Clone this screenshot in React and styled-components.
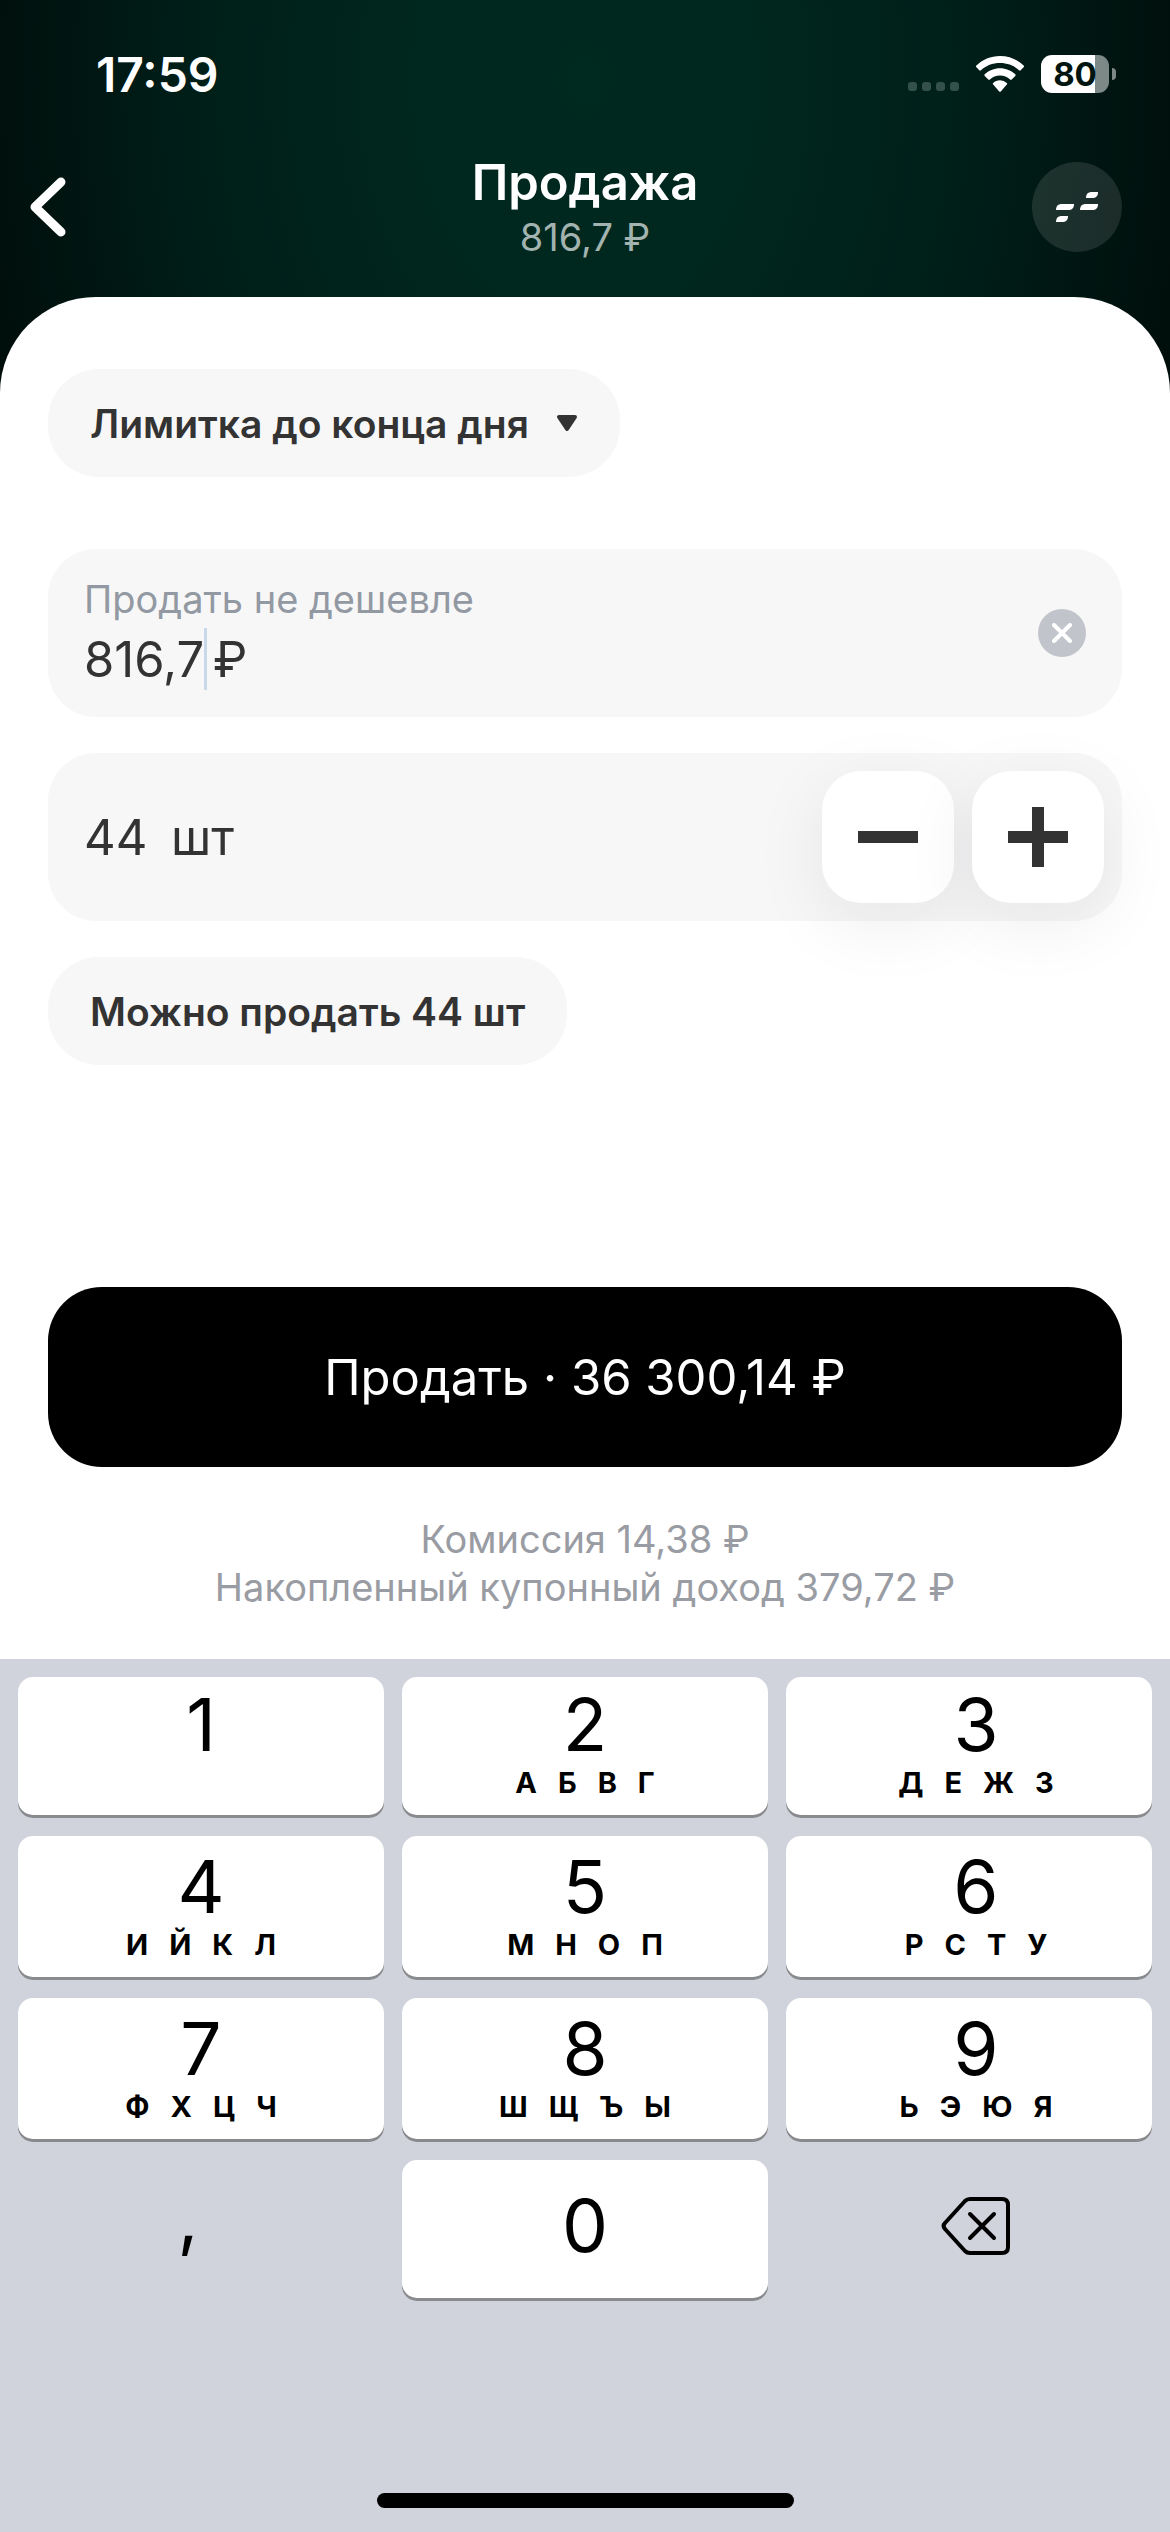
import React, { useState } from "react";
import styled, { createGlobalStyle } from "styled-components";

const GlobalStyle = createGlobalStyle`
  * {
    box-sizing: border-box;
  }

  body {
    margin: 0;
    background: #d0d3dc;
    font-family: Inter, "Liberation Sans", sans-serif;
    color: #333333;
  }

  button,
  input {
    margin: 0;
    padding: 0;
    border: none;
    background: none;
    font-family: inherit;
    color: inherit;
  }

  h1,
  p {
    margin: 0;
  }

  svg {
    display: block;
  }
`;

const ROWS = [
  [
    { digit: "1", letters: "" },
    { digit: "2", letters: "АБВГ" },
    { digit: "3", letters: "ДЕЖЗ" },
  ],
  [
    { digit: "4", letters: "ИЙКЛ" },
    { digit: "5", letters: "МНОП" },
    { digit: "6", letters: "РСТУ" },
  ],
  [
    { digit: "7", letters: "ФХЦЧ" },
    { digit: "8", letters: "ШЩЪЫ" },
    { digit: "9", letters: "ЬЭЮЯ" },
  ],
];

function StatusBar() {
  return (
    <StatusBarStyle>
      <Clock>17:59</Clock>
      <StatusIcons>
        <Dots>
          <i />
          <i />
          <i />
          <i />
        </Dots>
        <svg width="48" height="36" viewBox="0 0 48 36" fill="#ffffff">
          <path d="M24 0C14.7 0 6.3 3.6.4 9.600a1.200 1.200 0 0 0 0 1.700l2.900 2.900a1.200 1.200 0 0 0 1.700 0C9.900 9.400 16.600 6.900 24 6.900s14.100 2.500 19 7.300a1.200 1.200 0 0 0 1.700 0l2.900-2.900a1.200 1.200 0 0 0 0-1.700C41.700 3.600 33.300 0 24 0z" />
          <path d="M24 12.200c-5.900 0-11.300 2.300-15.300 6.100a1.200 1.200 0 0 0 0 1.700l3.600 3.600a1.200 1.200 0 0 0 1.600 0c2.700-2.500 6.200-4 10.100-4s7.400 1.500 10.100 4a1.200 1.200 0 0 0 1.600 0l3.600-3.600a1.200 1.200 0 0 0 0-1.700C35.300 14.500 29.900 12.200 24 12.200z" />
          <path d="M24 24.300c-2.600 0-5 1-6.800 2.600a1.200 1.200 0 0 0 0 1.700l6 6.900a1.200 1.200 0 0 0 1.600 0l6-6.900a1.200 1.200 0 0 0 0-1.700A10.200 10.200 0 0 0 24 24.300z" />
        </svg>
        <Battery>
          <BatteryBody>80</BatteryBody>
          <BatteryTip />
        </Battery>
      </StatusIcons>
    </StatusBarStyle>
  );
}

function NumKey({ digit, letters }) {
  return (
    <Key>
      <Digit>{digit}</Digit>
      <Letters>
        {letters.split("").map((letter) => (
          <span key={letter}>{letter}</span>
        ))}
      </Letters>
    </Key>
  );
}

function App() {
  const [price, setPrice] = useState("816,7");
  const [count, setCount] = useState(44);

  return (
    <Page>
      <GlobalStyle />
      <StatusBar />

      {/* ---------header--------- */}
      <Header>
        <BackButton aria-label="Назад">
          <svg width="36" height="60" viewBox="0 0 36 60" fill="none">
            <path
              d="M31 5L5 30l26 25"
              stroke="#ffffff"
              strokeWidth="9"
              strokeLinecap="round"
              strokeLinejoin="round"
            />
          </svg>
        </BackButton>
        <Titles>
          <h1>Продажа</h1>
          <p>816,7 ₽</p>
        </Titles>
        <DepthButton aria-label="Стакан">
          <svg width="42" height="30" viewBox="0 0 42 30" fill="#ffffff">
            <path d="M30 6c0-4 2-6 6-6h6c0 4-2 6-6 6z" />
            <path d="M0 18c0-4 2-6 6-6h12c0 4-2 6-6 6z" />
            <path d="M24 18c0-4 2-6 6-6h12c0 4-2 6-6 6z" />
            <path d="M0 30c0-4 2-6 6-6h6c0 4-2 6-6 6z" />
          </svg>
        </DepthButton>
      </Header>

      {/* ---------order form--------- */}
      <Sheet>
        <Pill>
          Лимитка до конца дня
          <svg width="22" height="18" viewBox="0 0 22 18">
            <path
              d="M3 3h16l-8 12z"
              fill="#333333"
              stroke="#333333"
              strokeWidth="4"
              strokeLinejoin="round"
            />
          </svg>
        </Pill>

        <Fields>
          <Field>
            <FieldText>
              <label htmlFor="price">Продать не дешевле</label>
              <ValueRow>
                <ValueInput
                  id="price"
                  $width="120px"
                  value={price}
                  onChange={(e) => setPrice(e.target.value)}
                />
                <Caret />
                <span>₽</span>
              </ValueRow>
            </FieldText>
            <ClearButton aria-label="Очистить" onClick={() => setPrice("")}>
              <svg width="20" height="20" viewBox="0 0 20 20">
                <path
                  d="M2 2l16 16M18 2L2 18"
                  stroke="#ffffff"
                  strokeWidth="4"
                  strokeLinecap="round"
                />
              </svg>
            </ClearButton>
          </Field>

          <Field>
            <ValueRow $gap="24px">
              <ValueInput
                aria-label="Количество"
                $width="63px"
                value={count}
                onChange={(e) => setCount(Number(e.target.value) || 0)}
              />
              <span>шт</span>
            </ValueRow>
            <Stepper>
              <StepButton
                aria-label="Меньше"
                onClick={() => setCount(count - 1)}
              >
                <svg width="60" height="60" viewBox="0 0 60 60" fill="#333333">
                  <path d="M0 24h60v12H0z" />
                </svg>
              </StepButton>
              <StepButton
                aria-label="Больше"
                onClick={() => setCount(count + 1)}
              >
                <svg width="60" height="60" viewBox="0 0 60 60" fill="#333333">
                  <path d="M0 24h60v12H0zM24 0h12v60H24z" />
                </svg>
              </StepButton>
            </Stepper>
          </Field>

          <Pill>Можно продать 44 шт</Pill>
        </Fields>

        <SellButton>Продать · 36 300,14 ₽</SellButton>
        <Notes>
          <p>Комиссия 14,38 ₽</p>
          <p>Накопленный купонный доход 379,72 ₽</p>
        </Notes>
      </Sheet>

      {/* ---------keyboard--------- */}
      <Keyboard>
        {ROWS.map((row) => (
          <KeyRow key={row[0].digit}>
            {row.map((item) => (
              <NumKey key={item.digit} {...item} />
            ))}
          </KeyRow>
        ))}
        <KeyRow>
          <CommaKey>,</CommaKey>
          <ZeroKey>0</ZeroKey>
          <PlainKey aria-label="Удалить">
            <svg width="70" height="60" viewBox="0 0 70 60" fill="none">
              <path
                d="M29 3h32q6 0 6 6v42q0 6-6 6H29q-3 0-5-2L4 33q-3-3 0-6L24 5q2-2 5-2z"
                stroke="#000000"
                strokeWidth="4"
                strokeLinejoin="round"
              />
              <path
                d="M29 18l24 24M53 18L29 42"
                stroke="#000000"
                strokeWidth="4"
                strokeLinecap="round"
              />
            </svg>
          </PlainKey>
        </KeyRow>
        <HomeBar />
      </Keyboard>
    </Page>
  );
}

export default App;

const Page = styled.div`
  display: flex;
  flex-direction: column;
  min-height: 100vh;
  background: radial-gradient(
    ellipse 640px 900px at 50% 80px,
    #00291f 0%,
    #00271e 28%,
    #001f19 60%,
    #000f0c 94%,
    #000d0a 100%
  );
`;

/* status bar */
const StatusBarStyle = styled.div`
  display: flex;
  justify-content: space-between;
  align-items: center;
  height: 150px;
  padding: 0 54px 2px 96px;
  color: #ffffff;
`;

const Clock = styled.span`
  font-size: 48px;
  font-weight: 600;
`;

const StatusIcons = styled.div`
  display: flex;
  align-items: center;
  gap: 17px;
`;

const Dots = styled.div`
  display: flex;
  align-self: flex-end;
  gap: 5px;
  padding-bottom: 2px;

  i {
    width: 9px;
    height: 9px;
    border-radius: 3px;
    background: #33504a;
  }
`;

const Battery = styled.div`
  display: flex;
  align-items: center;
  gap: 3px;
`;

const BatteryBody = styled.span`
  width: 68px;
  height: 38px;
  border-radius: 11px;
  background: linear-gradient(to right, #ffffff 80%, #7c8986 80%);
  color: #00150f;
  font-size: 33px;
  font-weight: 700;
  line-height: 38px;
  text-align: center;
`;

const BatteryTip = styled.span`
  width: 4px;
  height: 12px;
  border-radius: 0 4px 4px 0;
  background: #7c8986;
`;

/* header */
const Header = styled.header`
  display: grid;
  grid-template-columns: 108px 1fr 90px;
  align-items: center;
  height: 147px;
  padding: 0 48px 33px 30px;
`;

const BackButton = styled.button`
  width: 36px;
`;

const Titles = styled.div`
  text-align: center;

  h1 {
    color: #ffffff;
    font-size: 49px;
    font-weight: 600;
    line-height: 60px;
  }

  p {
    color: #a3b3af;
    font-size: 38px;
    line-height: 48px;
  }
`;

const DepthButton = styled.button`
  display: flex;
  justify-content: center;
  align-items: center;
  width: 90px;
  height: 90px;
  border-radius: 50%;
  background: rgba(255, 255, 255, 0.11);
`;

/* sheet */
const Sheet = styled.main`
  display: flex;
  flex-direction: column;
  align-items: flex-start;
  padding: 72px 48px 48px;
  border-radius: 96px 96px 0 0;
  background: #ffffff;
`;

const Pill = styled.button`
  display: flex;
  align-items: center;
  gap: 27px;
  height: 108px;
  padding: 0 42px;
  border-radius: 51px;
  background: #f7f7f7;
  font-size: 39px;
  font-weight: 600;
`;

const Fields = styled.div`
  display: flex;
  flex-direction: column;
  align-items: flex-start;
  gap: 36px;
  width: 100%;
  padding: 72px 0 222px;
`;

const Field = styled.div`
  display: flex;
  justify-content: space-between;
  align-items: center;
  width: 100%;
  height: 168px;
  padding: 0 18px 0 36px;
  border-radius: 48px;
  background: #f7f7f7;

  label {
    color: #9299a2;
    font-size: 38px;
    line-height: 48px;
  }
`;

const FieldText = styled.div`
  display: flex;
  flex-direction: column;
  padding-top: 4px;
`;

const ValueRow = styled.div`
  display: flex;
  align-items: center;
  gap: ${(props) => props.$gap || "0"};
  height: 72px;
  font-size: 49px;
`;

const ValueInput = styled.input`
  width: ${(props) => props.$width};
  height: 62px;
  outline: none;
  font-size: 49px;
`;

const Caret = styled.i`
  width: 3px;
  height: 62px;
  margin-right: 6px;
  background: #c9d8ea;
`;

const ClearButton = styled.button`
  display: flex;
  justify-content: center;
  align-items: center;
  width: 48px;
  height: 48px;
  margin-right: 18px;
  border-radius: 50%;
  background: #c1c4ca;
`;

const Stepper = styled.div`
  display: flex;
  gap: 18px;
`;

const StepButton = styled.button`
  display: flex;
  justify-content: center;
  align-items: center;
  width: 132px;
  height: 132px;
  border-radius: 39px;
  background: #ffffff;
  box-shadow: 0 18px 72px rgba(20, 20, 40, 0.08);
`;

const SellButton = styled.button`
  width: 100%;
  height: 180px;
  border-radius: 54px;
  background: #000000;
  color: #ffffff;
  font-size: 49px;
`;

const Notes = styled.div`
  width: 100%;
  padding-top: 48px;
  color: #999ca3;
  font-size: 38px;
  line-height: 48px;
  text-align: center;
`;

/* keyboard */
const Keyboard = styled.div`
  display: flex;
  flex: 1;
  flex-direction: column;
  gap: 21px;
  padding: 18px 18px 24px;
  background: #d0d3dc;
`;

const KeyRow = styled.div`
  display: grid;
  grid-template-columns: repeat(3, 1fr);
  gap: 18px;
  height: 141px;

  &:first-child,
  &:nth-child(4) {
    height: 138px;
  }

  button:last-child {
    padding-left: 14px;
  }
`;

const Key = styled.button`
  display: flex;
  flex-direction: column;
  justify-content: flex-end;
  align-items: center;
  padding-bottom: 14px;
  border-radius: 15px;
  background: #ffffff;
  box-shadow: 0 3px 0 #898a8d;
  color: #000000;
`;

const Digit = styled.span`
  font-size: 73px;
  line-height: 80px;
`;

const Letters = styled.span`
  display: flex;
  gap: 21px;
  height: 36px;
  font-size: 29px;
  font-weight: 700;
  line-height: 36px;
`;

const PlainKey = styled.button`
  display: flex;
  justify-content: center;
  align-items: center;
  padding-bottom: 6px;
  color: #000000;
  font-size: 73px;
  line-height: 78px;
`;

const CommaKey = styled(PlainKey)`
  padding-right: 26px;
  padding-bottom: 24px;
`;

const ZeroKey = styled(PlainKey)`
  border-radius: 15px;
  background: #ffffff;
  box-shadow: 0 3px 0 #898a8d;
`;

const HomeBar = styled.div`
  align-self: center;
  width: 417px;
  height: 15px;
  margin-top: auto;
  border-radius: 8px;
  background: #000000;
`;
